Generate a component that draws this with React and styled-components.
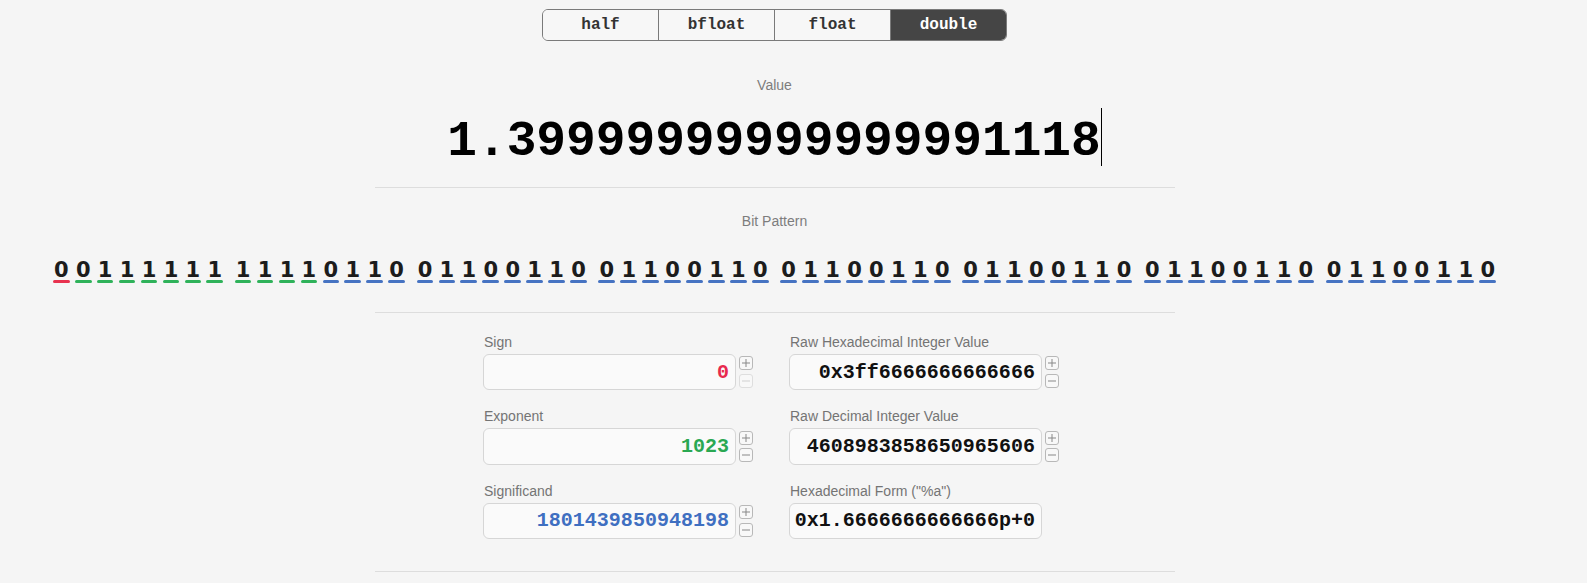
import React from "react";
import styled, { createGlobalStyle } from "styled-components";

const GlobalStyle = createGlobalStyle`
  html, body { margin: 0; padding: 0; background: #f5f5f5; }
  body { font-family: "Liberation Sans", Arial, sans-serif; }
`;

const Page = styled.div`
  width: 1549px;
  display: flex;
  flex-direction: column;
  align-items: center;
  padding-top: 9px;
`;

const TabBar = styled.div`
  display: flex;
  width: 465px;
  height: 32px;
  box-sizing: border-box;
  border: 1px solid #7a7a7a;
  border-radius: 6px;
  overflow: hidden;
`;

const Tab = styled.button`
  flex: 1;
  margin: 0;
  padding: 0;
  border: none;
  border-left: ${(p) => (p.$first ? "none" : "1px solid #7a7a7a")};
  background: ${(p) => (p.$active ? "#454545" : "#f7f7f7")};
  color: ${(p) => (p.$active ? "#ffffff" : "#333333")};
  font: bold 16px "Liberation Mono", "Courier New", monospace;
  cursor: pointer;
`;

const SectionLabel = styled.div`
  margin-top: ${(p) => p.$top}px;
  font-size: 14px;
  line-height: 16px;
  color: #7d7d7d;
`;

const ValueRow = styled.div`
  margin-top: 14.7px;
  display: flex;
  align-items: flex-start;
  height: 58.85px;
`;

const ValueText = styled.span`
  margin-top: 8.85px;
  font: bold 49.5px/50px "Liberation Mono", "Courier New", monospace;
  color: #000;
  white-space: pre;
`;

const Caret = styled.span`
  width: 1px;
  height: 58px;
  background: #000;
`;

const Divider = styled.div`
  width: 800px;
  height: 1px;
  background: #dddddd;
  margin-top: ${(p) => p.$top}px;
`;

const BitRow = styled.div`
  margin-top: 30.7px;
  display: flex;
`;

const Bit = styled.div`
  width: 16.7px;
  display: flex;
  flex-direction: column;
  align-items: center;
  margin-left: ${(p) => p.$gap}px;
`;

const BitDigit = styled.span`
  font: bold 21px/20px "DejaVu Sans", Verdana, sans-serif;
  color: #1c1c1c;
`;

const BitLine = styled.span`
  width: 100%;
  height: 3px;
  border-radius: 2px;
  background: ${(p) => p.$color};
`;

const FieldGrid = styled.div`
  margin-top: 21px;
  width: 800px;
  box-sizing: border-box;
  padding-left: 108px;
  display: grid;
  grid-template-columns: 271px 271px;
  column-gap: 35px;
  row-gap: 18px;
`;

const Field = styled.div`
  display: flex;
  flex-direction: column;
`;

const FieldLabel = styled.div`
  font-size: 14px;
  line-height: 16px;
  color: #747474;
  padding-left: 1.5px;
  margin-bottom: 4px;
  white-space: nowrap;
`;

const InputRow = styled.div`
  display: flex;
  align-items: center;
  gap: 3.6px;
`;

const InputBox = styled.div`
  width: 253.4px;
  height: 36.4px;
  box-sizing: border-box;
  border: 1px solid #d6d6d6;
  border-radius: 6px;
  background: #fafafa;
  display: flex;
  align-items: center;
  justify-content: flex-end;
  padding-right: 6px;
  font: bold 20px "Liberation Mono", "Courier New", monospace;
  color: ${(p) => p.$color};
  white-space: pre;
`;

const Stepper = styled.div`
  display: flex;
  flex-direction: column;
  gap: 3.6px;
`;

const StepBtn = styled.div`
  width: 14px;
  height: 14px;
  box-sizing: border-box;
  border: 1px solid ${(p) => (p.$disabled ? "#dedede" : "#b8b8b8")};
  border-radius: 3px;
  background: #f8f8f8;
  display: flex;
  align-items: center;
  justify-content: center;
  color: ${(p) => (p.$disabled ? "#d0d0d0" : "#888888")};
`;

const Plus = () => (
  <svg width="8" height="8" viewBox="0 0 8 8">
    <path d="M4 0V8M0 4H8" stroke="currentColor" strokeWidth="1" />
  </svg>
);
const Minus = () => (
  <svg width="8" height="8" viewBox="0 0 8 8">
    <path d="M0 4H8" stroke="currentColor" strokeWidth="1" />
  </svg>
);

const RED = "#e8324f";
const GREEN = "#2fb25a";
const BLUE = "#4673c2";

const bits = "0011111111110110011001100110011001100110011001100110011001100110";

const fields = [
  { label: "Sign", value: "0", color: "#e8294d", stepper: true, minusDisabled: true },
  { label: "Raw Hexadecimal Integer Value", value: "0x3ff6666666666666", color: "#111", stepper: true },
  { label: "Exponent", value: "1023", color: "#2aa852", stepper: true },
  { label: "Raw Decimal Integer Value", value: "4608983858650965606", color: "#111", stepper: true },
  { label: "Significand", value: "1801439850948198", color: "#3f6fc1", stepper: true },
  { label: "Hexadecimal Form (\"%a\")", value: "0x1.6666666666666p+0", color: "#111", stepper: false },
];

export default function App() {
  const tabs = ["half", "bfloat", "float", "double"];
  return (
    <>
      <GlobalStyle />
      <Page>
        <TabBar>
          {tabs.map((t, i) => (
            <Tab key={t} $first={i === 0} $active={t === "double"}>
              {t}
            </Tab>
          ))}
        </TabBar>

        <SectionLabel $top={36.3}>Value</SectionLabel>
        <ValueRow>
          <ValueText>1.39999999999999991118</ValueText>
          <Caret />
        </ValueRow>
        <Divider $top={20} />

        <SectionLabel $top={25}>Bit Pattern</SectionLabel>
        <BitRow>
          {bits.split("").map((b, i) => {
            const color = i === 0 ? RED : i < 12 ? GREEN : BLUE;
            const gap = i === 0 ? 0 : i % 8 === 0 ? 11.6 : 5.25;
            return (
              <Bit key={i} $gap={gap}>
                <BitDigit>{b}</BitDigit>
                <BitLine $color={color} />
              </Bit>
            );
          })}
        </BitRow>
        <Divider $top={29.3} />

        <FieldGrid>
          {fields.map((f) => (
            <Field key={f.label}>
              <FieldLabel>{f.label}</FieldLabel>
              <InputRow>
                <InputBox $color={f.color}>{f.value}</InputBox>
                {f.stepper && (
                  <Stepper>
                    <StepBtn>
                      <Plus />
                    </StepBtn>
                    <StepBtn $disabled={f.minusDisabled}>
                      <Minus />
                    </StepBtn>
                  </Stepper>
                )}
              </InputRow>
            </Field>
          ))}
        </FieldGrid>
        <Divider $top={32} />
      </Page>
    </>
  );
}
